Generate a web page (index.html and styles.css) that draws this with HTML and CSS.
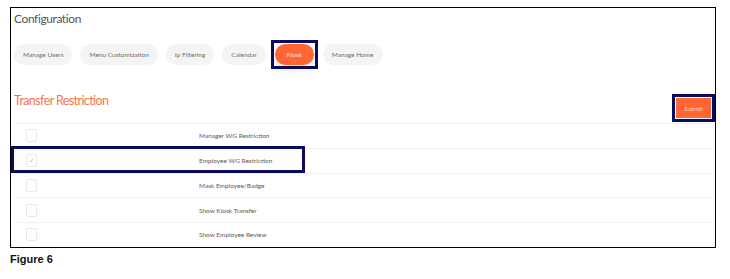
FILE: index.html
```html
<!DOCTYPE html>
<html lang="en">
<head>
    <meta charset="UTF-8">
    <meta name="viewport" content="width=device-width, initial-scale=1.0">
    <title>Configuration - Kiosk</title>
    <link rel="stylesheet" href="styles.css">
</head>
<body>

<div class="panel">
    <h1 class="title">Configuration</h1>

    <div class="tabs">
        <button class="tab">Manage Users</button>
        <button class="tab">Menu Customization</button>
        <button class="tab">Ip Filtering</button>
        <button class="tab">Calendar</button>
        <span class="mark mark-tab"><button class="tab active">Kiosk</button></span>
        <button class="tab">Manage Home</button>
    </div>

    <div class="section-head">
        <h2 class="section-title">Transfer Restriction</h2>
        <span class="mark mark-submit"><button class="submit">Submit</button></span>
    </div>

    <div class="rules">
        <div class="rule">
            <span class="check"></span>
            <span class="rule-label">Manager WG Restriction</span>
        </div>
        <div class="rule rule-marked">
            <span class="check checked">&#10003;</span>
            <span class="rule-label">Employee WG Restriction</span>
        </div>
        <div class="rule">
            <span class="check"></span>
            <span class="rule-label">Mask Employee/Badge</span>
        </div>
        <div class="rule">
            <span class="check"></span>
            <span class="rule-label">Show Kiosk Transfer</span>
        </div>
        <div class="rule">
            <span class="check"></span>
            <span class="rule-label">Show Employee Review</span>
        </div>
    </div>
</div>

<p class="caption">Figure 6</p>

</body>
</html>
```

FILE: styles.css
```css
body {
    margin: 0;
    background: #fff;
    font-family: Lato, "Open Sans", sans-serif;
}

.panel {
    box-sizing: border-box;
    width: 706px;
    height: 241px;
    margin: 7px 0 0 10px;
    padding: 0 2px 0 3px;
    border: 1.5px solid #000;
}

.title {
    margin: 3px 0 0;
    font-size: 12px;
    letter-spacing: -0.4px;
    line-height: 16px;
    font-weight: 400;
    color: #555;
}

.tabs {
    display: flex;
    align-items: center;
    gap: 8px;
    margin-top: 13px;
    height: 29px;
}

.tab {
    height: 21px;
    padding: 0 9px;
    border: none;
    border-radius: 11px;
    background: #f4f4f4;
    color: #707070;
    font-family: inherit;
    font-size: 6.5px;
}

.tab.active {
    width: 39px;
    padding: 0;
    background: #ff6633;
    color: #fde3d8;
    box-shadow: 0 4px 8px rgba(0, 0, 0, 0.14);
}

/* navy annotation boxes */
.mark {
    display: inline-flex;
    padding: 1px;
    border: 3px solid #0b0b5e;
}

.mark-tab {
    margin: 0 -3px;
}

.section-head {
    display: flex;
    justify-content: space-between;
    align-items: flex-start;
    margin-top: 25px;
}

.section-title {
    margin: -1px 0 0;
    font-size: 12.5px;
    letter-spacing: -0.6px;
    line-height: 16px;
    font-weight: 400;
    color: #f7764f;
}

.mark-submit {
    margin-right: -2px;
}

.submit {
    width: 35px;
    height: 20px;
    padding: 0;
    border: none;
    background: #ff6633;
    color: #fcd9cc;
    font-family: inherit;
    font-size: 6px;
}

.rules {
    margin-top: 1px;
}

.rule {
    position: relative;
    display: grid;
    grid-template-columns: 185px 1fr;
    align-items: center;
    height: 24.75px;
    box-sizing: border-box;
    border-top: 1px solid #f1f1f1;
}

.rule-marked::after {
    content: "";
    position: absolute;
    top: -3px;
    left: -3px;
    width: 288px;
    height: 21px;
    border: 3px solid #0b0b5e;
}

.check {
    box-sizing: border-box;
    width: 11px;
    height: 13px;
    margin-left: 12px;
    border: 1px solid #e8e8e8;
    border-radius: 2px;
    color: #c4c4c4;
    font-size: 7px;
    line-height: 11px;
    text-align: center;
}

.rule-label {
    font-size: 6.5px;
    color: #5a5a5a;
}

.caption {
    margin: 5px 0 0 10px;
    font-family: "Liberation Sans", Arial, sans-serif;
    font-size: 11px;
    font-weight: bold;
    line-height: 13px;
    color: #111;
}
```
